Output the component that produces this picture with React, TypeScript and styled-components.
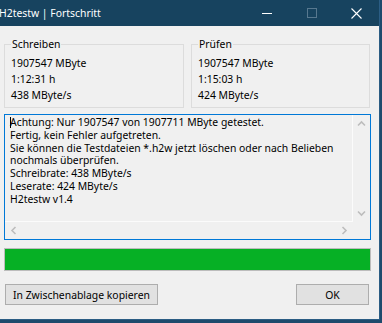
import styled, { createGlobalStyle } from "styled-components";

const GlobalStyle = createGlobalStyle`
  html, body {
    margin: 0;
    padding: 0;
  }
  body {
    width: 382px;
    height: 323px;
    overflow: hidden;
    background: #1e4a6c;
    font-family: "Noto Sans", "Open Sans", sans-serif;
    color: #000;
  }
`;

const reportLines = [
  "Achtung: Nur 1907547 von 1907711 MByte getestet.",
  "Fertig, kein Fehler aufgetreten.",
  "Sie können die Testdateien *.h2w jetzt löschen oder nach Belieben",
  "nochmals überprüfen.",
  "Schreibrate: 438 MByte/s",
  "Leserate: 424 MByte/s",
  "H2testw v1.4",
];

const groups = [
  { title: "Schreiben", width: 180, rows: ["1907547 MByte", "1:12:31 h", "438 MByte/s"] },
  { title: "Prüfen", width: 179, rows: ["1907547 MByte", "1:15:03 h", "424 MByte/s"] },
];

function Chevron({ dir }: { dir: "up" | "down" | "left" | "right" }) {
  const rot = { up: 0, right: 90, down: 180, left: 270 }[dir];
  return (
    <svg width="9" height="9" viewBox="0 0 9 9" style={{ transform: `rotate(${rot}deg)` }}>
      <polyline points="1,6.5 4.5,3 8,6.5" fill="none" stroke="#bdbdbd" strokeWidth="1.6" />
    </svg>
  );
}

export default function App() {
  const progress = 100;

  return (
    <>
      <GlobalStyle />
      <Window>
        <TitleBar>
          <TitleText>H2testw | Fortschritt</TitleText>
          <CaptionButton>
            <svg width="10" height="10" viewBox="0 0 10 10">
              <line x1="0" y1="5.5" x2="10" y2="5.5" stroke="#fff" strokeWidth="1" />
            </svg>
          </CaptionButton>
          <CaptionButton>
            <svg width="10" height="10" viewBox="0 0 10 10">
              <rect x="0.5" y="0.5" width="9" height="9" fill="none" stroke="#57788f" strokeWidth="1" />
            </svg>
          </CaptionButton>
          <CaptionButton>
            <svg width="11" height="11" viewBox="0 0 11 11">
              <path d="M0.5 0.5 L10.5 10.5 M10.5 0.5 L0.5 10.5" stroke="#fff" strokeWidth="1.1" />
            </svg>
          </CaptionButton>
        </TitleBar>

        <Content>
          <GroupRow>
            {groups.map((g) => (
              <GroupBox key={g.title} $width={g.width}>
                <GroupLabel>{g.title}</GroupLabel>
                {g.rows.map((r) => (
                  <GroupLine key={r}>{r}</GroupLine>
                ))}
              </GroupBox>
            ))}
          </GroupRow>

          <ReportBox>
            <ReportText>
              {reportLines.map((l, i) => (
                <div key={i}>
                  {i === 0 && <Caret />}
                  {l}
                </div>
              ))}
            </ReportText>
            <VScroll>
              <ScrollArrow>
                <Chevron dir="up" />
              </ScrollArrow>
              <ScrollArrow>
                <Chevron dir="down" />
              </ScrollArrow>
            </VScroll>
            <HScroll>
              <ScrollArrow>
                <Chevron dir="left" />
              </ScrollArrow>
              <ScrollArrow>
                <Chevron dir="right" />
              </ScrollArrow>
            </HScroll>
            <div />
          </ReportBox>

          <ProgressTrack>
            <ProgressFill style={{ width: `${progress}%` }} />
          </ProgressTrack>

          <ButtonRow>
            <DialogButton $width={153}>In Zwischenablage kopieren</DialogButton>
            <DialogButton $width={73}>OK</DialogButton>
          </ButtonRow>
        </Content>
      </Window>
    </>
  );
}

const Window = styled.div`
  width: 380px;
  height: 320px;
  box-sizing: border-box;
  border-right: 1px solid #2b5d84;
  border-bottom: 1px solid #2b5d84;
  background: #f0f0f0;
  display: flex;
  flex-direction: column;
`;

const TitleBar = styled.div`
  height: 26px;
  flex-shrink: 0;
  display: flex;
  align-items: center;
  background: #17435f;
  color: #fff;
  font-size: 10.4px;
`;

const TitleText = styled.div`
  flex: 1;
  text-indent: -1px;
  white-space: nowrap;
`;

const CaptionButton = styled.div`
  width: 45px;
  height: 26px;
  display: flex;
  align-items: center;
  justify-content: center;
`;

const Content = styled.div`
  display: flex;
  flex-direction: column;
  padding: 12px 9px 0 4px;
`;

const GroupRow = styled.div`
  display: flex;
  gap: 7px;
`;

const GroupBox = styled.fieldset<{ $width: number }>`
  width: ${({ $width }) => $width}px;
  box-sizing: border-box;
  min-width: 0;
  margin: 0;
  padding: 4px 6px 4px;
  border: 1px solid #dcdcdc;
`;

const GroupLabel = styled.legend`
  padding: 0 1px;
  font-size: 10.4px;
  line-height: 13px;
`;

const GroupLine = styled.div`
  font-size: 10.4px;
  line-height: 16px;
  white-space: nowrap;
`;

const ReportBox = styled.div`
  margin-top: 6px;
  width: 367px;
  height: 126px;
  box-sizing: border-box;
  border: 1px solid #0078d7;
  display: grid;
  grid-template-columns: 1fr 17px;
  grid-template-rows: 1fr 17px;
  background: #f0f0f0;
`;

const ReportText = styled.div`
  padding: 1px 5px;
  font-size: 10.4px;
  line-height: 12.8px;
  white-space: pre;
  overflow: hidden;
  border-right: 1px solid #fbfbfb;
  border-bottom: 1px solid #fbfbfb;
`;

const Caret = styled.span`
  display: inline-block;
  width: 1px;
  height: 11px;
  margin-right: -1px;
  background: #000;
  vertical-align: -2px;
`;

const VScroll = styled.div`
  display: flex;
  flex-direction: column;
  justify-content: space-between;
`;

const HScroll = styled.div`
  display: flex;
  justify-content: space-between;
`;

const ScrollArrow = styled.div`
  width: 17px;
  height: 17px;
  display: flex;
  align-items: center;
  justify-content: center;
`;

const ProgressTrack = styled.div`
  margin-top: 8px;
  width: 367px;
  height: 23px;
  box-sizing: border-box;
  border: 1px solid #bcbcbc;
  background: #e6e6e6;
`;

const ProgressFill = styled.div`
  height: 100%;
  background: #06b025;
`;

const ButtonRow = styled.div`
  margin-top: 13px;
  padding: 0 1px;
  display: flex;
  justify-content: space-between;
`;

const DialogButton = styled.button<{ $width: number }>`
  width: ${({ $width }) => $width}px;
  height: 21px;
  padding: 0;
  border: 1px solid #adadad;
  background: #e1e1e1;
  font-family: inherit;
  font-size: 10.4px;
  color: #000;
`;
